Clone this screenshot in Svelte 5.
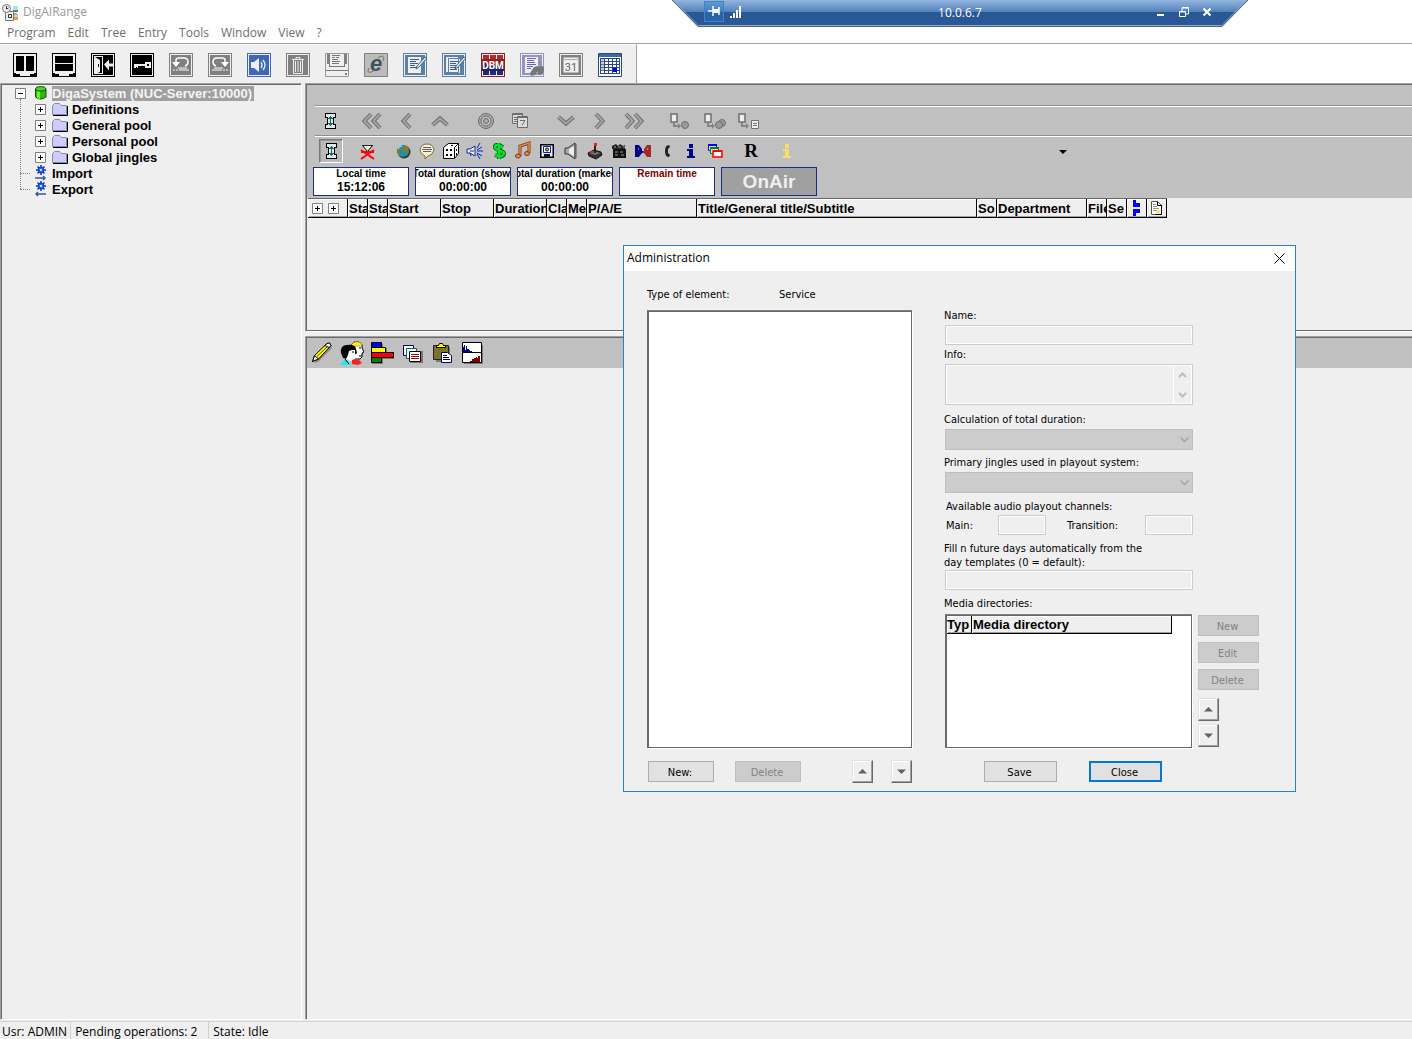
<script>
  const menus = ['Program', 'Edit', 'Tree', 'Entry', 'Tools', 'Window', 'View', '?'];

  const mainTools = [
    'columns', 'rows', 'exit', 'key', 'undo', 'redo', 'sound', 'trash',
    'print', 'browser', 'note', 'notes', 'dbm', 'search', 'day', 'planner'
  ];

  const navGroups = [
    ['collapse'],
    ['first', 'previous', 'up'],
    ['target', 'dates'],
    ['down', 'next', 'last'],
    ['insert one', 'insert many', 'insert list']
  ];

  const filterGroups = [
    ['collapse'],
    ['clear filter'],
    ['globe', 'comment', 'dice', 'announce', 'money', 'music', 'disk', 'speaker',
      'joystick', 'clapper', 'dialogue', 'phone', 'info', 'windows'],
    ['R'],
    ['hint']
  ];

  const clocks = [
    { label: 'Local time', value: '15:12:06' },
    { label: 'Total duration (show)', value: '00:00:00' },
    { label: 'Total duration (marked)', value: '00:00:00' },
    { label: 'Remain time', value: '', warn: true }
  ];

  const columns = [
    { label: '', icon: 'plus', width: 40 },
    { label: 'Sta', width: 20 },
    { label: 'Sta', width: 20 },
    { label: 'Start', width: 53 },
    { label: 'Stop', width: 53 },
    { label: 'Duration', width: 53 },
    { label: 'Cla', width: 20 },
    { label: 'Me', width: 20 },
    { label: 'P/A/E', width: 110 },
    { label: 'Title/General title/Subtitle', width: 280 },
    { label: 'So', width: 20 },
    { label: 'Department', width: 90 },
    { label: 'File', width: 20 },
    { label: 'Se', width: 20 },
    { label: '', icon: 'link', width: 20 },
    { label: '', icon: 'page', width: 20 }
  ];

  const folders = ['Definitions', 'General pool', 'Personal pool', 'Global jingles'];
  const editTools = ['pencil', 'people', 'chart', 'copies', 'paste', 'levels'];
</script>

{#snippet chevron(d)}
  <path {d} fill="none" stroke="#6c6c6c" stroke-width="4" />
  <path {d} fill="none" stroke="#a4a4a4" stroke-width="2" />
{/snippet}

{#snippet frame(color)}
  <rect width="24" height="24" fill={color} />
  <rect x="1.5" y="1.5" width="21" height="21" fill="none" stroke="#efefef" />
{/snippet}

{#snippet large(name)}
  <svg class="large" viewBox="0 0 24 24" aria-hidden="true">
    {#if name === 'columns' || name === 'rows'}
      <path d="M0 0h24v24H0z" />
      <path d="M1 1h22v22H1z" fill="#efefef" />
      {#if name === 'columns'}
        <path d="M3 3h8v15H3zM13 3h8v15h-8z" />
      {:else}
        <path d="M3 3h18v7H3zM3 11h18v7H3z" />
      {/if}
      <path d="M1 20h2v1h4v2H1zM23 20h-2v1h-4v2h6z" />
    {:else if name === 'exit'}
      {@render frame('#000')}
      <path d="M3 3h9v18H3z" fill="#efefef" />
      <path d="M4 4h7v16H4z" />
      <path d="M4 4l5 3v12l-5 2z" fill="#efefef" />
      <path d="M7 11h1v3H7z" />
      <path d="M13 11.500l5-5v4h5v3h-5v4z" fill="#efefef" />
    {:else if name === 'key'}
      {@render frame('#000')}
      <path d="M15 9h6v6h-6v-2H8v2H7v-1H6v1H4v-4h11z" fill="#efefef" />
      <path d="M17 11h2v2h-2z" />
    {:else if name === 'undo'}
      {@render frame('#808080')}
      <path d="M7 12V7q0-2 3-2h5q4 0 4 4 0 3-3 4" fill="none" stroke="#fff" stroke-width="1.5" />
      <path d="M3 9h8l-4 5z" fill="#fff" />
      <path d="M4 17h2M7 17h2M10 17h10M9 15h9" stroke="#fff" />
    {:else if name === 'redo'}
      {@render frame('#808080')}
      <path d="M17 12V7q0-2-3-2H9Q5 5 5 9q0 3 3 4" fill="none" stroke="#fff" stroke-width="1.5" />
      <path d="M21 9h-8l4 5z" fill="#fff" />
      <path d="M20 17h-2M17 17h-2M14 17H4M15 15H6" stroke="#fff" />
    {:else if name === 'sound'}
      {@render frame('#3d68b8')}
      <path d="M4 9h3l5-4v14l-5-4H4z" fill="#efefef" />
      <path d="M14 9q2 3 0 6M16 7q4 5 0 10" fill="none" stroke="#efefef" stroke-width="1.3" />
    {:else if name === 'trash'}
      {@render frame('#808080')}
      <path d="M6 6.500h12M10 6V4.500h4V6M7.500 7v13.500h9V7" fill="none" stroke="#efefef" />
      <path d="M9.500 8v11M12 8v11M14.500 8v11" stroke="#efefef" />
    {:else if name === 'print'}
      <path d="M.5.5h23v23H.5z" fill="#efefef" stroke="#999" />
      <path d="M2 1h3v10H2zM19 1h3v10h-3z" fill="#808080" />
      <path d="M5 1h14v12H5z" fill="#efefef" />
      <path d="M7 2.500h8M7 4.500h3M11 4.500h3M7 6.500h6M7 8.500h8M7 10.500h7M4 13.500h16M1 17.500h22M4.500 11v3M19.500 11v3" stroke="#777" />
      <path d="M20 20h2v2h-2z" fill="#777" />
    {:else if name === 'browser'}
      <path d="M.5.5h23v23H.5z" fill="#bcbcbc" stroke="#808080" />
      <text x="12" y="18" class="glyph-e">e</text>
      <path d="M5 15C2 21 7 20 11 17M14 5c5-4 7-1 5 3" fill="none" stroke="#776d55" />
    {:else if name === 'note' || name === 'notes'}
      {@render frame('#5c80a5')}
      <path d="M3 3h18v18H3z" fill="#5c80a5" />
      {#if name === 'notes'}
        <path d="M3.500 3.500h13v16h-13zM6.500 5.500h12v15h-12z" fill="#efefef" stroke="#5c80a5" />
        <path d="M8 8.500h8M8 10.500h6M8 12.500h8M8 14.500h6M8 16.500h7" stroke="#345f8b" />
      {:else}
        <path d="M5 4h13v16H5z" fill="#efefef" />
        <path d="M7 6.500h9M7 8.500h6M7 10.500h8M7 12.500h5M7 14.500h7" stroke="#345f8b" />
      {/if}
      <path d="M24 5L16 14l-3 2 1-3L22 4z" fill="#efefef" stroke="#345f8b" />
    {:else if name === 'dbm'}
      <path d="M0 0h24v24H0z" fill="#8b2020" />
      <path d="M1 1h22v22H1z" fill="#eee" />
      <path d="M2 2h6v5H2zM9 2h6v5H9zM16 2h6v5h-6z" fill="#b82a2a" />
      <path d="M2 17h6v5H2zM9 17h6v5H9zM16 17h6v5h-6z" fill="#242486" />
      <path d="M1 6h22v6H1z" fill="#8e2222" /><path d="M1 12h22v6H1z" fill="#22225f" />
      <text x="12" y="16" class="glyph-dbm">DBM</text>
    {:else if name === 'search'}
      {@render frame('#9494c0')}
      <path d="M3 3h18v18H3z" fill="#9494c0" />
      <path d="M5 4h13v16H5z" fill="#efefef" />
      <path d="M7 5.500h9M7 7.500h7M7 9.500h8M7 11.500h9M7 13.500h6M7 15.500h4" stroke="#6666aa" />
      <path d="M10 20l4-6 3-1 2 1 4-1 1 3-1 5-4 1-2-3-2 3-4 1z" fill="#777" />
    {:else if name === 'day'}
      {@render frame('#808080')}
      <path d="M3.500 3.500h17v17h-17z" fill="#efefef" stroke="#808080" stroke-width="2" />
      <path d="M5 6.500h14" stroke="#aaa" />
      <text x="12" y="18" class="glyph-day">31</text>
    {:else if name === 'planner'}
      <path d="M.5.5h23v23H.5z" fill="#fff" stroke="#28477c" />
      <path d="M1 1h22v3H1z" fill="#406aa7" />
      <path d="M2 5.500h20M2 8.500h20M2 11.500h20M2 14.500h20M2 17.500h20M2 20.500h20M2.500 5v16M6.500 5v16M10.500 5v16M14.500 5v16M18.500 5v16M21.500 5v16" stroke="#28477c" />
      <path d="M3 6h3v12H3z" fill="#999" opacity=".5" />
      <path d="M15 15h4v4h-4z" fill="#00e" />
    {:else if name === 'pencil'}
      <path d="M4 22L21 5l1 2L8 21z" fill="#888" />
      <path d="M2.500 20.500l2-6L17 2.500q3-2 4 2L8.500 18z" fill="#ff0" stroke="#000" />
      <path d="M2.500 20.500l2-6 4 3.500zM17 2.500q3-2 4 2l-2 2-4-2z" fill="#fff" stroke="#000" />
      <path d="M7 15.500L18 5" stroke="#443" />
    {:else if name === 'people'}
      <path d="M11 4q3-4 7-3 5 1 4 6l2 4-2 1v4l-2 2h-7z" fill="#fff" stroke="#000" />
      <path d="M11 4q3-4 7-3 4 0 4 4h-5l-5 1z" fill="#ffe92e" stroke="#776500" stroke-dasharray="1 1" />
      <path d="M1 12q-1-8 6-8 8-1 9 4l1 4-2 2v4H7L3 17z" />
      <path d="M9 10l3-1h3v3l1 2-1 1v3l-5 2-4-2 2-4z" fill="#fff" />
      <path d="M0 24l4-5 4 1 3 4z" fill="#1de9ef" /><path d="M5 18l4 5" stroke="#000" />
      <path d="M12 19l6-1 4 4-4 2-6-1z" fill="#f22" />
      <path d="M19 7h2M19 15h3M12 11h2" fill="none" stroke="#000" />
    {:else if name === 'chart'}
      <path d="M2 23h11v-5h11v-6h-7V7h-4V2" fill="#777" />
      <path d="M1.500 1.500h10v5h-10z" fill="#00f" stroke="#000" />
      <path d="M1.500 6.500h14v5h-14z" fill="#ff0" stroke="#000" />
      <path d="M1.500 11.500h22v5h-22z" fill="#f00" stroke="#000" />
      <path d="M1.500 16.500h10v5h-10z" fill="#008000" stroke="#000" />
    {:else if name === 'copies'}
      <path d="M9 10h14v12H10z" fill="#777" />
      <g fill="#fff">
        <path d="M3.500 4.500h10v10h-10z" stroke="#000060" />
        <path d="M6.500 7.500h10v10h-10z" stroke="#006868" />
        <path d="M9.500 10.500h11v10h-11z" stroke="#000" />
      </g>
      <path d="M11 13.500h8M11 15.500h8M11 17.500h8" stroke="#900" />
    {:else if name === 'paste'}
      <path d="M6 6h14v15H6z" fill="#777" />
      <path d="M3.500 4.500h15v14h-15z" fill="#77752c" stroke="#222" />
      <path d="M6.500 6.500v-2h2l1-2h3l1 2h2v2z" fill="#ff0" stroke="#000" />
      <path d="M11.500 11.500h6l4 3v7h-10z" fill="#fff" stroke="#000080" />
      <path d="M13 14.500h4M13 16.500h6M13 18.500h7" stroke="#000" />
    {:else if name === 'levels'}
      <path d="M4 4h19v19H4z" fill="#777" />
      <path d="M2.500 1.500h19v20h-19z" fill="#fff" stroke="#000" />
      <path d="M3 11V6h1V4h1v5h1V5h1v3h2v1h1v1h2v1z" fill="#000080" />
      <path d="M10 21v-1h2v-2h2v-1h2v-1h1v1h1v-2h2v6z" fill="#800000" />
      <path d="M3 11.500h18" stroke="#000" />
    {/if}
  </svg>
{/snippet}

{#snippet small(name)}
  <svg class="small" viewBox="0 0 20 20" aria-hidden="true">
    {#if name === 'collapse'}
      <path d="M5 2h11v5h-2v6h2v5H5v-5h2V7H5z" />
      <path d="M6 3h9v3h-2v1H8V6H6zM6 17h9v-3h-2v-1H8v1H6zM8 8h5v4H8z" fill="#e6e6e6" />
      <path d="M10 5h1v10h-1zM8 7h5v1H8zM9 6h3v1H9zM8 12h5v1H8zM9 13h3v1H9z" fill="#007070" />
    {:else if name === 'first'}
      {@render chevron('M9 3L2.500 10 9 17M18 3l-6.500 7L18 17')}
    {:else if name === 'previous'}
      {@render chevron('M14 3L7.500 10 14 17')}
    {:else if name === 'up'}
      {@render chevron('M2.500 14L10 7.500 17.500 14')}
    {:else if name === 'down'}
      {@render chevron('M2.500 6L10 12.500 17.500 6')}
    {:else if name === 'next'}
      {@render chevron('M6 3l6.500 7L6 17')}
    {:else if name === 'last'}
      {@render chevron('M2 3l6.500 7L2 17M11 3l6.500 7L11 17')}
    {:else if name === 'target'}
      <circle cx="10" cy="10" r="7.500" fill="#aaa" stroke="#6c6c6c" />
      <circle cx="10" cy="10" r="5" fill="#c0c0c0" stroke="#6c6c6c" />
      <circle cx="10" cy="10" r="2.500" fill="#aaa" stroke="#6c6c6c" />
    {:else if name === 'dates'}
      <path d="M2.500 2.500h10v10h-10z" fill="#ddd" stroke="#6c6c6c" />
      <path d="M2 3.500h11M4 6.500h3M4 8.500h3M4 10.500h3" stroke="#6c6c6c" />
      <path d="M7.500 5.500h10v11h-10z" fill="#ddd" stroke="#6c6c6c" />
      <path d="M8 6.500h9M10 9.500h5l-3 5" fill="none" stroke="#6c6c6c" />
    {:else if name.startsWith('insert')}
      <path d="M1 3h6v8H1z" fill="#eee" stroke="#6f6f6f" stroke-width="1.500" />
      <path d="M3 12v4h5v2l3-3-3-3v2H5v-2z" fill="#858585" />
      {#if name === 'insert list'}
        <path d="M13.500 9.500h7v8h-7z" fill="#eee" stroke="#6f6f6f" />
        <path d="M15 12.500h4M15 14.500h4" stroke="#6f6f6f" />
      {:else}
        {#if name === 'insert many'}<circle cx="18" cy="12" r="3.500" fill="#999" stroke="#6f6f6f" />{/if}
        <circle cx="15" cy="14" r="3.500" fill="#999" stroke="#6f6f6f" />
      {/if}
    {:else if name === 'clear filter'}
      <path d="M5.500 4.500h10l-5 6z" fill="#eee" stroke="#000" />
      <path d="M5 4.500h11" stroke="#222" />
      <path d="M4 9l13 9M17 9L4 18M4 11h13" stroke="#f00" stroke-width="2" />
    {:else if name === 'globe'}
      <circle cx="11" cy="11" r="6.500" fill="#333" />
      <circle cx="10" cy="10" r="6" fill="#1294b4" />
      <path d="M11 4q4 1 5 5l-1 4-3-3-2 1-1-3 2-2zM6 6l2 1-2 4 3 3-1 1q-5-3-4-7z" fill="#8a7a2a" />
      <path d="M5 8q1-3 4-3" fill="none" stroke="#7df" stroke-width="1.500" />
    {:else if name === 'comment'}
      <path d="M8 15q-5-2-5-6 1-6 7-6t7 6q-1 5-6 6l-3 3z" fill="#fff3bc" stroke="#776b45" />
      <path d="M6 6.500h8M5 8.500h10M6 10.500h8" stroke="#555a99" />
    {:else if name === 'dice'}
      <path d="M2.500 6.500l5-4h10v10l-4 5h-11z" fill="#fff" stroke="#000" />
      <path d="M13.500 17V6.500l4-4" fill="none" stroke="#000" />
      <path d="M5 8h2v2H5zM9 8h2v2H9zM5 13h2v2H5zM9 13h2v2H9zM15 8h1v2h-1zM15 12h1v2h-1zM10 4h2v1h-2z" />
    {:else if name === 'announce'}
      <path d="M2 8h3l5-3v10l-5-3H2z" fill="#eee" stroke="#112a99" />
      <path d="M5 10h4M5 12l1 3" stroke="#112a99" />
      <path d="M12 7l3-5M12 9l5-3M12 10h6M12 12l5 3M12 13l3 5" stroke="#0827d1" />
    {:else if name === 'money'}
      <path d="M14 6q-8-4-8 0c0 4 9 3 9 7q-1 4-9 1M10 2v16" fill="none" stroke="#044d04" stroke-width="4" />
      <path d="M14 6q-8-4-8 0c0 4 9 3 9 7q-1 4-9 1M10 2v16" fill="none" stroke="#00e030" stroke-width="2.500" />
    {:else if name === 'music'}
      <path d="M7 15V5l9-3v10" fill="none" stroke="#7c3420" stroke-width="3" />
      <path d="M7 15V5l9-3v10" fill="none" stroke="#db8e46" stroke-width="1.500" />
      <ellipse cx="5" cy="15" rx="2.500" ry="2" fill="#db8e46" stroke="#7c3420" />
      <ellipse cx="14" cy="12.500" rx="2.500" ry="2" fill="#db8e46" stroke="#7c3420" />
    {:else if name === 'disk'}
      <path d="M3 3h14v14H3z" /><path d="M4.500 4.500h11v11h-11z" fill="#ececff" />
      <path d="M6.500 5.500h7v6h-7z" fill="#fff" stroke="#0020b0" />
      <circle cx="10" cy="8.500" r="1.500" fill="#dc2" stroke="#000" />
      <path d="M7 13h6v3H7z" fill="#112" />
    {:else if name === 'speaker'}
      <path d="M4 7h3l7-5v16l-7-5H4z" fill="#aaa" stroke="#333" />
      <path d="M8 8l5-3v10l-5-3z" fill="#eee" /><path d="M15 3v14" stroke="#555" />
    {:else if name === 'joystick'}
      <path d="M3 12l6-3 7 2 1 3-6 4-7-3z" fill="#333" stroke="#111" />
      <path d="M4 12l5-2 6 2-5 2z" fill="#777" />
      <path d="M10 12V3" stroke="#222" stroke-width="2" /><path d="M9 2h3v3H9zM5 10h3v2H5z" fill="#d22" />
    {:else if name === 'clapper'}
      <path d="M4 8h13v9H4z" fill="#111" />
      <path d="M3 5l4-2 2 2 2-2 3 2 2-1v4H3z" fill="#222" />
      <path d="M5 6h2M9 6h3M14 6h2M6 11h3M11 11h3M6 14h3M12 14h3" stroke="#999" />
    {:else if name === 'dialogue'}
      <path d="M2 4h4l3 4v2h1v2H9l-3 4H2z" fill="#000080" />
      <path d="M18 4h-4l-3 4v2h-1v2h1l3 4h4z" fill="#a42a2a" />
      <path d="M5 8h1M14 8h1" stroke="#ddd" />
    {:else if name === 'phone'}
      <path d="M12 4q-4 0-4 6t4 6l1-2-2-2V8l2-2z" fill="#222" />
    {:else if name === 'info' || name === 'hint'}
      <path d="M8 3h4v4H8zM6 8h6v7h2v2H6v-2h2v-5H6z" fill={name === 'info' ? '#00008b' : '#ffdc72'} />
    {:else if name === 'windows'}
      <path d="M3.500 3.500h8v6h-8z" fill="#ddd" stroke="#00f" /><path d="M3 4h9" stroke="#00f" stroke-width="2" />
      <path d="M5.500 6.500h8v6h-8z" fill="#ddd" stroke="#008000" /><path d="M5 7h9" stroke="#008000" stroke-width="2" />
      <path d="M8 10h9v6H8z" fill="#fff" stroke="#f00" stroke-width="1.500" /><path d="M8 10h9" stroke="#f00" stroke-width="2" />
    {:else if name === 'R'}
      <text x="10" y="16" class="glyph-r">R</text>
    {:else if name === 'drop'}
      <path d="M6 9h8l-4 4z" />
    {/if}
  </svg>
{/snippet}

{#snippet expander(open)}
  <svg class="expander" viewBox="0 0 11 11" aria-hidden="true">
    <path d="M.5.5h10v10H.5z" fill="#fff" stroke="#808080" />
    <path d={open ? 'M3 5.500h5' : 'M3 5.500h5M5.500 3v5'} stroke="#000" />
  </svg>
{/snippet}

{#snippet gear(arrow)}
  <svg class="node-icon" viewBox="0 0 12 16" aria-hidden="true">
    <path d="M6 0v10M1 5h10M2.500 1.500l7 7M9.500 1.500l-7 7" stroke="#0a35c8" stroke-width="1.500" />
    <circle cx="6" cy="5" r="3" fill="#2a63ee" stroke="#0a35c8" />
    <circle cx="6" cy="5" r="1" fill="#fff" />
    <path d={arrow} fill="none" stroke="#345b91" stroke-width="1.500" />
  </svg>
{/snippet}

{#snippet triangle(up)}
  <svg class="triangle" viewBox="0 0 9 5" aria-hidden="true">
    <path d={up ? 'M0 4.500L4.500 0 9 4.500z' : 'M0 .5L4.500 5 9 .5z'} fill="#606060" />
  </svg>
{/snippet}

{#snippet pick(id)}
  <div class="pick">
    <select {id} disabled><option></option></select>
    <svg viewBox="0 0 9 6" aria-hidden="true"><path d="M.5.5l4 4 4-4" fill="none" stroke="#a3a3a3" stroke-width="1.500" /></svg>
  </div>
{/snippet}

<div class="app">
  <header class="titlebar">
    <svg class="logo" viewBox="0 0 17 17" aria-hidden="true">
      <path d="M11 2h5v5h-5zM11 10h5v6h-5z" fill="#b8dde0" />
      <path d="M11 9h4v2h-4zM12 13h4v3h-4z" fill="#e79a4c" /><path d="M11 6h5v2h-5z" fill="#2c99a0" />
      <path d="M3.500 7.500h8v9h-8z" fill="#eee" stroke="#777" /><path d="M6.500 10.500h3v3h-3z" fill="none" stroke="#333" />
      <circle cx="4.500" cy="4.500" r="4" fill="#eee" stroke="#777" /><path d="M4.500 2v3l2-1" fill="none" stroke="#333" />
    </svg>
    <span>DigAIRange</span>
  </header>

  <nav class="menu" aria-label="Main menu">
    {#each menus as item}<button type="button">{item}</button>{/each}
  </nav>

  <div class="rebar">
    <div class="main-tools">
      {#each mainTools as name}
        <button type="button" aria-label={name}>{@render large(name)}</button>
      {/each}
    </div>
  </div>

  <main class="workspace">
    <aside class="pane tree-pane">
      <ul class="tree">
        <li class="root">
          {@render expander(true)}
          <svg class="node-icon can" viewBox="0 0 12 14" aria-hidden="true">
            <path d="M.5 3v8q5 4 10.500 0V3z" fill="#2bbd05" stroke="#164d05" />
            <path d="M2 4v8l3 1V5z" fill="#6cf22a" /><ellipse cx="5.700" cy="2.800" rx="5" ry="2.200" fill="#4cdb18" stroke="#164d05" />
          </svg>
          <span class="selected">DigaSystem (NUC-Server:10000)</span>
        </li>
        {#each folders as folder}
          <li class="child">
            {@render expander(false)}
            <svg class="folder" viewBox="0 0 16 13" aria-hidden="true">
              <path d="M1 12.500h14.500V3" fill="none" stroke="#000" />
              <path d="M.5 11.500v-9l2-2h5l2 2h5v9z" fill="#ccccff" stroke="#8c8c9c" />
            </svg>
            <span class="text">{folder}</span>
          </li>
        {/each}
        <li class="leaf">{@render gear('M0 13h10M8 11l2 2-2 2')}<span class="text">Import</span></li>
        <li class="leaf">{@render gear('M11 13H1M3 11l-2 2 2 2')}<span class="text">Export</span></li>
      </ul>
    </aside>

    <div class="stack">
      <section class="pane show-pane">
        <div class="bands">
          <div class="band spacer"></div>
          <div class="band nav-row">
            {#each navGroups as group}
              <div class="group">
                {#each group as name}
                  <button type="button" aria-label={name}>{@render small(name)}</button>
                {/each}
              </div>
            {/each}
          </div>
          <div class="band filter-row">
            {#each filterGroups as group, i}
              <div class="group">
                {#each group as name}
                  <button type="button" class:pressed={i === 0} aria-label={name}>{@render small(name)}</button>
                {/each}
              </div>
            {/each}
            <button type="button" class="more" aria-label="more">{@render small('drop')}</button>
          </div>
          <div class="clocks">
            {#each clocks as clock}
              <div class="clock" class:warn={clock.warn}>
                <small>{clock.label}</small>
                <b>{clock.value}</b>
              </div>
            {/each}
            <button type="button" class="clock onair">OnAir</button>
          </div>
        </div>
        <table class="headings show-table">
          <colgroup>
            {#each columns as col}<col style="width: {col.width}px" />{/each}
          </colgroup>
          <thead>
            <tr>
              {#each columns as col}
                <th scope="col">
                  {#if col.icon === 'plus'}
                    <span class="pluses">{@render expander(false)}{@render expander(false)}</span>
                  {:else if col.icon === 'link'}
                    <svg class="cell-icon" viewBox="0 0 16 16" aria-hidden="true">
                      <path d="M5 0h3v3h4v4H5zM5 9h7v4H8v3H5z" fill="#00f" />
                    </svg>
                  {:else if col.icon === 'page'}
                    <svg class="cell-icon" viewBox="0 0 16 16" aria-hidden="true">
                      <path d="M3.500 1.500h6l4 4v9h-10z" fill="#fff" stroke="#555" />
                      <path d="M9.500 1.500v4h4M13.500 5v9.500H7" fill="none" stroke="#000" />
                      <path d="M5 4.500h3M5 6.500h4M5 8.500h6M5 10.500h4" stroke="#999" /><path d="M9 10h3v3H8z" fill="#ffe94d" />
                    </svg>
                  {:else}{col.label}{/if}
                </th>
              {/each}
            </tr>
          </thead>
        </table>
      </section>

      <section class="pane edit-pane">
        <div class="edit-tools">
          {#each editTools as name}
            <button type="button" aria-label={name}>{@render large(name)}</button>
          {/each}
        </div>
      </section>
    </div>
  </main>

  <footer class="status">
    <span>Usr: ADMIN</span>
    <span class="wide">Pending operations: 2</span>
    <span>State: Idle</span>
  </footer>

  <div class="remote">
    <svg class="remote-shape" viewBox="0 0 576 27" preserveAspectRatio="none" aria-hidden="true">
      <defs>
        <linearGradient id="glass" x1="0" y1="0" x2="0" y2="1">
          <stop offset="0" stop-color="#93b5e0" /><stop offset=".46" stop-color="#5080b8" />
          <stop offset=".46" stop-color="#2a5795" /><stop offset="1" stop-color="#2a5795" />
        </linearGradient>
      </defs>
      <path d="M0 0l26 26.500h524L576 0z" fill="url(#glass)" />
      <path d="M1 0l25 25.500h524L575 0" fill="none" stroke="#8caad0" />
      <path d="M0 0l26 26.500h524L576 0" fill="none" stroke="#555f70" />
    </svg>
    <button type="button" class="pin" aria-label="Pin">
      <svg viewBox="0 0 12 10" aria-hidden="true"><path d="M0 5h5M5 0v10M11 1v8" stroke="#fff" stroke-width="1.500" fill="none" /><path d="M5 3h6v4H5z" fill="#fff" /></svg>
    </button>
    <svg class="signal" viewBox="0 0 11 12" aria-hidden="true"><path d="M0 10h2v2H0zM3 7h2v5H3zM6 4h2v8H6zM9 0h2v12H9z" fill="#fff" /></svg>
    <span class="host">10.0.6.7</span>
    <div class="remote-buttons">
      <button type="button" aria-label="Minimize"><svg viewBox="0 0 10 10" aria-hidden="true"><path d="M1 8h7" stroke="#fff" stroke-width="2" /></svg></button>
      <button type="button" aria-label="Restore"><svg viewBox="0 0 10 10" aria-hidden="true"><path d="M.5 4.500h6v5h-6zM3 4V.500h6.500V7H7M3 1h6M1 5h5" fill="none" stroke="#fff" /></svg></button>
      <button type="button" aria-label="Disconnect"><svg viewBox="0 0 10 10" aria-hidden="true"><path d="M1.500 1.500l7 7M8.500 1.500l-7 7" stroke="#fff" stroke-width="2" /></svg></button>
    </div>
  </div>

  <div class="dialog" role="dialog" aria-labelledby="dialog-title">
    <div class="dialog-title">
      <span id="dialog-title">Administration</span>
      <button type="button" aria-label="Close dialog">
        <svg viewBox="0 0 11 11" aria-hidden="true"><path d="M.5.5l10 10M10.500.5l-10 10" stroke="#000" /></svg>
      </button>
    </div>
    <form class="dialog-body" onsubmit={(e) => e.preventDefault()}>
      <div class="left">
        <div class="kind"><span>Type of element:</span><span>Service</span></div>
        <div class="sunken elements" role="listbox" aria-label="Elements" tabindex="0"></div>
        <div class="actions">
          <button type="button" class="push">New:</button>
          <button type="button" class="push" disabled>Delete</button>
          <div class="arrows">
            <button type="button" class="raised" aria-label="Move up">{@render triangle(true)}</button>
            <button type="button" class="raised" aria-label="Move down">{@render triangle(false)}</button>
          </div>
        </div>
      </div>

      <div class="right">
        <div class="fields">
          <label for="name">Name:</label>
          <input id="name" type="text" disabled />
          <label for="info" class="near">Info:</label>
          <div class="memo">
            <textarea id="info" disabled></textarea>
            <div class="scroll">
              <svg viewBox="0 0 9 6" aria-hidden="true"><path d="M1 5l3.500-3.500L8 5" fill="none" stroke="#bcbcbc" stroke-width="2" /></svg>
              <svg viewBox="0 0 9 6" aria-hidden="true"><path d="M1 1l3.500 3.500L8 1" fill="none" stroke="#bcbcbc" stroke-width="2" /></svg>
            </div>
          </div>
          <label for="calc">Calculation of total duration:</label>
          {@render pick('calc')}
          <label for="primary">Primary jingles used in playout system:</label>
          {@render pick('primary')}
          <fieldset>
            <legend>Available audio playout channels:</legend>
            <div class="channels">
              <label for="chan-main">Main:</label>
              <input id="chan-main" type="text" disabled />
              <label for="transition">Transition:</label>
              <input id="transition" type="text" disabled />
            </div>
          </fieldset>
          <label for="fill">Fill n future days automatically from the<br />day templates (0 = default):</label>
          <input id="fill" type="text" disabled />
          <span class="caption">Media directories:</span>
        </div>
        <div class="media">
          <div class="sunken media-list">
            <table class="headings media-table">
              <thead><tr><th scope="col" class="type">Typ</th><th scope="col">Media directory</th></tr></thead>
            </table>
          </div>
          <div class="media-actions">
            <button type="button" class="push" disabled>New</button>
            <button type="button" class="push" disabled>Edit</button>
            <button type="button" class="push" disabled>Delete</button>
            <button type="button" class="raised" aria-label="Directory up">{@render triangle(true)}</button>
            <button type="button" class="raised" aria-label="Directory down">{@render triangle(false)}</button>
          </div>
        </div>
        <div class="confirm">
          <button type="button" class="push">Save</button>
          <button type="submit" class="push default">Close</button>
        </div>
      </div>
    </form>
  </div>
</div>

<style>
  :global(body) { margin: 0; background: #efefef; }
  * { box-sizing: border-box; }
  svg { display: block; }
  button {
    margin: 0; padding: 0; border: 0; background: none;
    font: inherit; color: inherit;
  }

  .app {
    position: relative; display: flex; flex-direction: column;
    min-height: 100vh; overflow: hidden;
    background: #efefef; color: #000;
    font: 12px/16px "Open Sans", "Noto Sans", sans-serif;
  }

  .titlebar {
    display: flex; align-items: center; gap: 4px;
    height: 24px; padding-left: 2px;
    background: #fff; color: #999;
  }
  .logo { width: 17px; height: 17px; }
  .menu {
    display: flex; gap: 12px; height: 19px; padding-left: 7px;
    background: #fff; color: #6d6d6d;
  }
  .menu button { height: 18px; }

  .rebar { height: 40px; border-top: 1px solid #a0a0a0; background: #fff; }
  .main-tools {
    display: flex; align-items: center; gap: 15px;
    width: 637px; height: 39px; padding-left: 13px; padding-top: 2px;
    background: #efefef; border-top: 1px solid #fff; border-right: 1px solid #a0a0a0;
  }
  .large { width: 24px; height: 24px; }
  .small { width: 20px; height: 20px; margin: 0 auto; overflow: visible; }
  .glyph-e { font: italic bold 22px "Liberation Sans", sans-serif; text-anchor: middle; fill: #3e525e; }
  .glyph-dbm { font: bold 10px Roboto, sans-serif; text-anchor: middle; fill: #fff; }
  .glyph-day { font: 11px Roboto, sans-serif; text-anchor: middle; fill: #666; }
  .glyph-r { font: bold 19px "Liberation Serif", serif; text-anchor: middle; fill: #000; }

  .workspace {
    flex: 1; display: grid; grid-template-columns: 302px minmax(0, 1fr); gap: 3px;
  }
  .pane {
    border: 1px solid #fff; border-top-color: #a0a0a0; border-left-color: #a0a0a0;
    box-shadow: inset 1px 1px #696969; padding: 1px 0 0 1px;
  }
  .stack { display: flex; flex-direction: column; gap: 4px; }
  .show-pane { flex: 0 0 249px; border-right: 0; box-shadow: inset 1px 1px #696969, inset 0 -1px #696969; }
  .edit-pane { flex: 1; border-right: 0; }

  .tree {
    position: relative; list-style: none; margin: 0; padding: 0 0 0 13px;
    font: bold 13px/16px "Liberation Sans", Arial, sans-serif;
  }
  .tree::before {
    content: ""; position: absolute; left: 18px; top: 14px; bottom: 8px;
    border-left: 1px dotted #808080;
  }
  .tree li { display: flex; align-items: center; height: 16px; }
  .tree .text { padding-top: 2px; }
  .expander { width: 11px; height: 11px; flex: none; }
  .node-icon { width: 12px; height: 16px; flex: none; margin-right: 5px; }
  .can { height: 14px; }
  .root .node-icon { margin-left: 9px; }
  .child { padding-left: 20px; }
  .folder { width: 16px; height: 13px; margin: 0 4px 0 6px; }
  .leaf::before {
    content: ""; width: 10px; margin: 0 5px 0 5px; border-top: 1px dotted #808080;
  }
  .selected { background: #a0a0a0; color: #f4f4f4; padding-right: 2px; height: 15px; line-height: 15px; }

  .bands { background: #c0c0c0; height: 113px; padding-left: 6px; }
  .band { display: flex; align-items: center; margin-left: 2px; }
  .spacer { height: 21px; border-bottom: 1px solid #909090; }
  .nav-row, .filter-row { padding-left: 3px; border-top: 1px solid #fff; }
  .nav-row { height: 30px; border-bottom: 1px solid #909090; gap: 22px; }
  .nav-row .group { gap: 10px; }
  .nav-row .group:first-child { margin-right: -4px; }
  .filter-row { height: 31px; gap: 12px; padding-left: 4px; padding-bottom: 2px; }
  .group { display: flex; }
  .group button, .more { width: 24px; height: 24px; }
  .more { margin-left: 240px; }
  .group .pressed {
    border: 1px solid #fff; border-top-color: #777; border-left-color: #777;
    box-shadow: inset 1px 1px #999; background: #bababa;
  }

  .clocks { display: flex; gap: 6px; }
  .clock {
    width: 96px; height: 29px; overflow: hidden;
    display: flex; flex-direction: column; align-items: center;
    border: 1px solid #1c2c84; background: #fff;
    font: bold 12px/14px "Liberation Sans", Arial, sans-serif;
  }
  .clock small { font-size: 10px; line-height: 12px; white-space: nowrap; }
  .warn { color: #800000; }
  .clock.onair {
    justify-content: center; background: #a0a0a0; color: #efefef;
    font-size: 19px;
  }

  .headings {
    table-layout: fixed; border-collapse: separate; border-spacing: 0;
    font: bold 13px/17px "Liberation Sans", Arial, sans-serif; text-align: left;
  }
  .headings th {
    height: 19px; padding: 0 0 0 1px; overflow: hidden; white-space: nowrap;
    background: #efefef; border-right: 1px solid #000; border-bottom: 1px solid #000;
    box-shadow: inset 1px 1px #fff, inset 0 -1px #a0a0a0;
  }
  .show-table { width: 859px; margin-left: 1px; border-top: 1px solid #696969; }
  .pluses { display: flex; gap: 5px; padding-left: 3px; }
  .cell-icon { width: 16px; height: 16px; }

  .edit-tools {
    display: flex; align-items: center; gap: 6px;
    height: 30px; padding-left: 3px; background: #c0c0c0;
  }

  .status {
    display: flex; height: 18px; margin-top: 1px; border-top: 1px solid #d0d0d0;
    line-height: 20px;
  }
  .status span { padding: 0 3px 0 2px; white-space: nowrap; }
  .status span + span { border-left: 1px solid #d0d0d0; padding-left: 4px; }
  .status .wide { width: 138px; }

  .remote {
    position: absolute; top: 0; left: 672px; width: 576px; height: 27px;
    display: flex; align-items: center; padding: 0 32px 3px; color: #fff;
  }
  .remote-shape { position: absolute; inset: 0; width: 100%; height: 27px; }
  .pin, .signal, .host, .remote-buttons { position: relative; }
  .pin { width: 20px; height: 21px; margin-bottom: 2px; border: 1px solid #3f83c9; background: rgba(40, 120, 200, 0.4); }
  .pin svg { width: 12px; height: 10px; margin: 0 auto; }
  .signal { width: 11px; height: 12px; margin-left: 6px; }
  .host { flex: 1; text-align: center; padding: 2px 0 0 23px; }
  .remote-buttons { display: flex; gap: 13px; margin-right: 4px; }
  .remote-buttons svg { width: 10px; height: 10px; }

  .dialog {
    position: absolute; left: 623px; top: 245px; width: 673px;
    border: 1px solid #2b7fc4; background: #efefef;
    font-size: 11px; line-height: 14px;
  }
  .dialog-title {
    display: flex; align-items: center; justify-content: space-between;
    height: 25px; padding: 0 10px 1px 3px; background: #fff; font-size: 12px;
  }
  .dialog-title svg { width: 11px; height: 11px; }
  .dialog-body {
    display: flex; gap: 33px; padding: 17px 23px 8px;
    font-family: "DejaVu Sans Condensed", "Noto Sans", sans-serif;
  }
  .left { width: 265px; display: flex; flex-direction: column; }
  .kind { display: grid; grid-template-columns: 132px 1fr; margin-bottom: 8px; }
  .sunken {
    background: #fff; border: 1px solid #696969; border-top-color: #808080;
    box-shadow: inset 1px 1px #696969, 1px 1px #fff; outline: 0;
  }
  .elements { height: 438px; }
  .actions { display: flex; align-items: center; gap: 21px; margin-top: 12px; padding-left: 1px; }
  .arrows { display: flex; gap: 18px; margin-left: auto; }

  .push {
    width: 66px; height: 21px; padding: 2px 2px 0 0;
    border: 1px solid #adadad; background: #e1e1e1; text-align: center;
  }
  .push:disabled { background: #ccc; border-color: #bfbfbf; color: #838383; }
  .default { border: 2px solid #0078d7; }
  .raised {
    display: grid; place-items: center; width: 21px; height: 23px;
    background: #efefef; border: 1px solid #696969;
    border-top-color: #e3e3e3; border-left-color: #e3e3e3;
    box-shadow: inset -1px -1px #a0a0a0, inset 1px 1px #fff;
  }
  .triangle { width: 9px; height: 5px; }

  .right { flex: 1; padding-top: 21px; }
  .fields { display: flex; flex-direction: column; width: 248px; }
  label, .caption, legend { display: block; padding: 0; margin-left: -1px; white-space: nowrap; }
  .fields > label { margin-top: 6px; margin-bottom: 2px; }
  .fields > label:first-child { margin-top: 0; }
  .fields > .near { margin-top: 3px; }
  .fields > .caption { margin-top: 7px; margin-bottom: 3px; }
  .fields > label[for="fill"] { margin-top: 7px; margin-bottom: 0; }
  input, textarea {
    display: block; width: 100%; height: 20px; margin: 0; padding: 0 3px;
    background: #efefef; border: 1px solid #ccc; border-radius: 0;
    box-shadow: inset 0 0 0 1px #fff; font: inherit;
  }
  .memo, .pick { display: grid; }
  .memo { margin-bottom: 2px; }
  .memo > *, .pick > * { grid-area: 1 / 1; }
  textarea { height: 41px; resize: none; overflow: hidden; }
  .scroll {
    justify-self: end; width: 18px; margin: 2px; border-left: 1px solid #fff;
    display: flex; flex-direction: column; justify-content: space-between; align-items: center;
    padding: 6px 0 5px;
  }
  .scroll svg { width: 9px; height: 6px; }
  select {
    appearance: none; width: 100%; height: 21px; margin: 0; opacity: 1;
    background: #ccc; border: 1px solid #bfbfbf; border-radius: 0; font: inherit;
  }
  .pick svg { width: 9px; height: 6px; place-self: center end; margin-right: 4px; }
  fieldset { margin: 7px 0 0; padding: 0; border: 0; min-width: 0; }
  legend { margin-left: 1px; }
  .channels {
    display: grid; grid-template-columns: 53px 48px 99px 48px; align-items: center;
    margin-top: 1px;
  }
  .channels label { margin-left: 1px; padding-top: 2px; }
  .channels input + label { margin-left: 21px; }

  .media { display: flex; gap: 6px; }
  .media-list { width: 247px; height: 134px; padding: 1px 0 0 1px; }
  .media-table { width: 225px; }
  .media-table th { height: 18px; padding-left: 1px; }
  .media-table .type { width: 25px; padding-left: 0; }
  .media-actions { display: flex; flex-direction: column; gap: 6px; padding-top: 1px; }
  .media-actions .push { width: 61px; }
  .media-actions .push:nth-child(3) { margin-bottom: 2px; }
  .media-actions .raised + .raised { margin-top: -3px; }
  .confirm { display: flex; gap: 32px; margin-top: 13px; padding-left: 39px; }
  .confirm .push { width: 73px; }
</style>
